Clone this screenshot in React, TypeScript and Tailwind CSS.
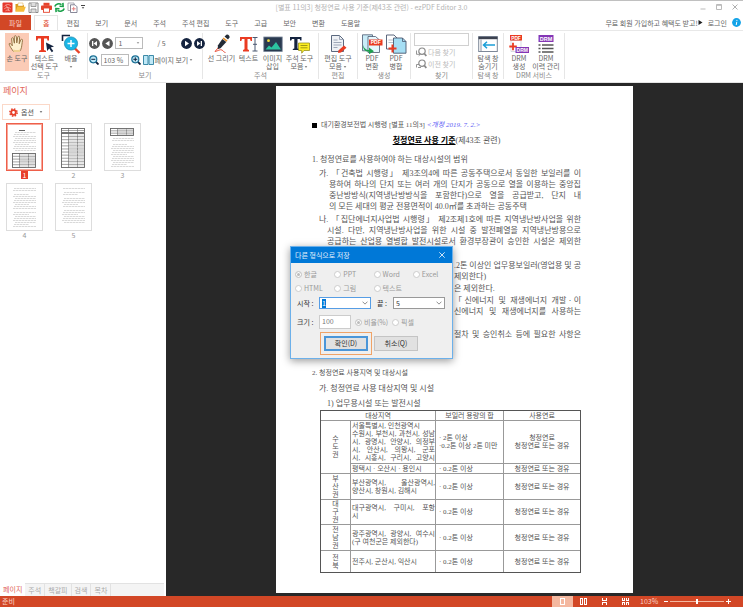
import React, { useEffect, useRef, useState } from 'react';

const UI_FONT = 'font-["Noto_Sans_CJK_KR","Open_Sans",sans-serif]';
const DOC_FONT = 'font-["Liberation_Serif","Noto_Sans_CJK_KR",serif]';

/* ---------- small shared pieces ---------- */

function Caret({ className = '' }: { className?: string }) {
  return (
    <svg viewBox="0 0 5 3" className={`inline-block shrink-0 w-[4px] h-[2px] ${className}`} fill="currentColor">
      <path d="M0.5 0.3h4L2.5 2.7z" />
    </svg>
  );
}

function Chevron() {
  return (
    <svg viewBox="0 0 8 5" className="w-[6px] h-[4px]" fill="none" stroke="#777" strokeWidth="1.1">
      <path d="M0.7 0.7L4 4l3.3-3.3" />
    </svg>
  );
}

/* ---------- title bar ---------- */

const quickIcons = [
  {
    label: 'ezPDF',
    art: (
      <>
        <rect x="0.5" y="0.5" width="10" height="10" rx="1" fill="#e5372c" />
        <path d="M2.2 4.5C4 2 7 2 8.800 3.800M2.200 6.800c2.500-2 5-1.500 6.600.2M3.500 8.800c1.500-1 3-1 4.300 0M4 3.500c1.500 1 2.500 3 2.500 5" stroke="#fbc9c0" strokeWidth="0.7" fill="none" />
      </>
    ),
  },
  {
    label: '열기',
    art: (
      <>
        <path d="M0.5 9.500V2h3.500l1 1.200h4v1.500" fill="#d99a1e" />
        <path d="M3 1h5v3H3z" fill="#fff" stroke="#d9a640" strokeWidth="0.5" />
        <path d="M0.5 9.800L2.300 4.800h8.500L9 9.800z" fill="#f6bd3b" />
      </>
    ),
  },
  {
    label: '저장',
    art: (
      <>
        <path d="M1 1h9v9.500H1z" fill="#fff" stroke="#8a8a8a" />
        <path d="M3 1v3.500h5V1M3 10.500V7h5v3.500" fill="#ddd" stroke="#8a8a8a" strokeWidth="0.8" />
      </>
    ),
  },
  {
    label: '인쇄',
    art: (
      <>
        <rect x="2.500" y="0.800" width="6" height="3" fill="#e5432c" />
        <rect x="0" y="3.500" width="11" height="4.500" rx="0.800" fill="#e5432c" />
        <rect x="2.500" y="6" width="6" height="4.300" fill="#fff" stroke="#e5432c" strokeWidth="0.900" />
      </>
    ),
  },
  {
    label: '새로 고침',
    art: (
      <path
        d="M0.800 4.500C1.500 2 5 .8 7.500 2.600M10.200 6.500C9.500 9 6 10.200 3.500 8.400M5.500 4.300l3.600.2-.2-3.600M5.500 6.700l-3.600-.2.2 3.600"
        fill="none"
        stroke="#18a048"
        strokeWidth="1.600"
      />
    ),
  },
  {
    label: '문서 추가',
    art: (
      <>
        <path d="M1 1h6v7.500H1z" fill="#fff" stroke="#9a9aa5" strokeWidth="0.800" />
        <path d="M3.500 2.800h4.500l2 2v5.700h-6.500z" fill="#fff" stroke="#6b6b80" strokeWidth="0.800" />
        <path d="M6.700 4.800v4M4.700 6.800h4" stroke="#e58080" strokeWidth="1" />
      </>
    ),
  },
];

function TitleBar() {
  return (
    <header className="h-[15px] pb-[2px] border-t border-[#c0c0c0] grid grid-cols-[1fr_auto_1fr] items-center">
      <div className="flex items-center gap-[2px] pl-[2px]">
        {quickIcons.map((q) => (
          <button key={q.label} aria-label={q.label} title={q.label}>
            <svg viewBox="0 0 11 11" className="block size-[11px]">{q.art}</svg>
          </button>
        ))}
        <button aria-label="빠른 실행 사용자 지정" className="flex flex-col items-center gap-px text-[#444] pl-px">
          <span className="w-[4px] h-px bg-[#444]" />
          <Caret className="block" />
        </button>
      </div>
      <h1 className="text-[7px] leading-[12px] text-[#b4b4b4] whitespace-nowrap">
        [별표 11의3] 청정연료 사용 기준(제43조 관련) - ezPDF Editor 3.0
      </h1>
      <div className="flex justify-end gap-[10px] pr-[5px]">
        <button aria-label="최소화">
          <svg viewBox="0 0 6 6" className="block size-[6px]" stroke="#bbb" fill="none"><path d="M0.500 5h5" /></svg>
        </button>
        <button aria-label="최대화">
          <svg viewBox="0 0 6 6" className="block size-[6px]" stroke="#bbb" fill="none"><path d="M0.500 0.500h5v5h-5zM0.500 1.300h5" /></svg>
        </button>
        <button aria-label="닫기">
          <svg viewBox="0 0 6 6" className="block size-[6px]" stroke="#b0b0b0" fill="none"><path d="M0.500 0.500l5 5M5.500 0.500l-5 5" /></svg>
        </button>
      </div>
    </header>
  );
}

/* ---------- ribbon tabs ---------- */

const ribbonTabs = ['홈', '편집', '보기', '문서', '주석', '주석 편집', '도구', '고급', '보안', '변환', '도움말'];

function RibbonTabs() {
  const [active, setActive] = useState('홈');
  return (
    <nav className="h-4 flex items-stretch border-b border-[#e8e8e8] text-[7px] leading-[16px] text-[#666] whitespace-nowrap">
      <button className="w-[31px] bg-[#d24726] text-[#fbd5c8] mr-[3px]">파일</button>
      {ribbonTabs.map((tab) => (
        <button
          key={tab}
          onClick={() => setActive(tab)}
          className={tab === active ? 'px-2 border-x border-t border-[#e4e4e4] text-[#e0452a] leading-[14px]' : 'px-2'}
        >
          {tab}
        </button>
      ))}
      <div className="ml-auto flex items-center gap-[5px] pr-[2px]">
        <a href="#join" className="flex items-center">
          무료 회원 가입하고 혜택도 받고!
          <svg viewBox="0 0 5 5" className="size-[5px]" fill="#222"><path d="M0.500 0l4 2.500-4 2.500z" /></svg>
        </a>
        <a href="#login">로그인</a>
        <button aria-label="정보">
          <svg viewBox="0 0 9 9" className="block size-[9px]">
            <circle cx="4.500" cy="4.500" r="4.400" fill="#13a3e8" />
            <path d="M4.800 3.800L4.200 7M4.900 1.900v1" stroke="#fff" strokeWidth="1" />
          </svg>
        </button>
      </div>
    </nav>
  );
}

/* ---------- ribbon icons ---------- */

const HandIcon = () => (
  <svg viewBox="0 0 20 20" className="w-5 h-5">
    <path
      d="M6.500 17.500C5 15.500 2.500 12 2 9.800c.8-.8 2-.2 3.300 2L4.600 4.600c.2-1.200 1.600-1.100 1.900.1l.9 4.500L7.300 2.600c.2-1.200 1.800-1.200 2 0l.5 6.300 1-5.900c.3-1.100 1.800-.9 1.800.3l-.4 6.400 1.700-4c.5-1 1.800-.5 1.600.6-.4 3-.7 5-1 7-.3 1.800-1 3-2 4.200z"
      fill="#fdf0cf"
      stroke="#8a6a3a"
      strokeWidth="0.900"
    />
    <path d="M6.500 15.500c2 .8 4.500.8 6.500 0v2.500H6.500z" fill="#f0cf8e" />
  </svg>
);

const SelectTextIcon = () => (
  <svg viewBox="0 0 20 20" className="w-5 h-5">
    <path d="M1 2h13v4.500h-1.500L12 4.500H9v11.500l2 .7V18H4v-1.300l2-.7V4.500H3L2.500 6.500H1z" fill="#ea3b22" />
    <path d="M11 8.500l8 4-3.300.9 2.600 3.700-1.500 1.200-2.600-3.700-2 2.400z" fill="#14233f" />
  </svg>
);

const ZoomIcon = () => (
  <svg viewBox="0 0 20 20" className="w-5 h-5">
    <path d="M1.500 7V1.500H9" fill="none" stroke="#14233f" strokeWidth="1.600" />
    <path d="M13.500 14l5 5" stroke="#e8432a" strokeWidth="2.400" />
    <circle cx="10" cy="9.500" r="6.600" fill="#1cb6e6" stroke="#1484a8" strokeWidth="0.700" />
    <path d="M10 6v7M6.500 9.500h7" stroke="#fff" strokeWidth="1.500" />
  </svg>
);

const PenIcon = () => (
  <svg viewBox="0 0 20 20" className="w-5 h-5">
    <path d="M12.500 2.500l2-1.800c1.500-.6 3.500 1 3 2.800l-1.500 2z" fill="#222b36" />
    <path d="M11.500 3.500l4 3-1 1.200-4-3z" fill="#e8902a" />
    <path d="M10.300 5l4 3-5.800 6.300-3 1 .5-4z" fill="#222b36" />
    <path d="M6 14l-3 3.500c3-.5 5-2.500 7-1.500 1.500.8 1 2 3.500 2.500" fill="none" stroke="#e8432a" strokeWidth="0.900" />
  </svg>
);

const TextIcon = () => (
  <svg viewBox="0 0 20 20" className="w-5 h-5">
    <path d="M1 3h12v4h-1.300L11 5H8.500v10.300l1.500.7v1.500H4V16l1.500-.7V5H3l-.7 2H1z" fill="#ea3b22" />
    <path d="M13.500 3.500h5M13.500 17h5M16 3.500V17M14 10.300h4" stroke="#4a5870" strokeWidth="1" />
  </svg>
);

const ImageIcon = () => (
  <svg viewBox="0 0 20 20" className="w-5 h-5">
    <rect x="0.800" y="3" width="18.400" height="14.500" fill="#2a3a50" stroke="#7b8899" strokeWidth="0.800" />
    <circle cx="5.500" cy="6.700" r="1.400" fill="#f6e03a" />
    <path d="M2.500 15.500l3.500-4 2.500 2 4.500-5.500 5 7.500z" fill="#2cc4a0" />
  </svg>
);

const NoteIcon = () => (
  <svg viewBox="0 0 20 20" className="w-5 h-5">
    <path d="M0 3h11.500v3.500h-1.200L9.700 5H7.500v9.500l1.500.5v1H2.800v-1l1.500-.5V5H2l-.8 1.500H0z" fill="#14233f" />
    <path d="M8.500 9H19.500v7.500H14l-2.300 2.700v-2.700H8.500z" fill="#fdee21" stroke="#8a8410" strokeWidth="0.700" />
    <path d="M10.500 11.500h7M10.500 13.800h7" stroke="#8a8410" strokeWidth="0.800" />
  </svg>
);

const EditDocIcon = () => (
  <svg viewBox="0 0 20 20" className="w-5 h-5">
    <path d="M3.500 1.500h8l4 4v12h-12z" fill="#eef1f5" stroke="#4a5870" strokeWidth="0.900" />
    <path d="M11.500 1.500v4h4M5.500 6h4M5.500 8.500h8M5.500 11h8M5.500 13.500h4" fill="none" stroke="#8a96a8" strokeWidth="0.800" />
    <path d="M10 19l.7-2.800 5.300-4.700 2.500 2.300-5.500 4.700z" fill="#ea3b22" />
  </svg>
);

const PdfConvertIcon = () => (
  <svg viewBox="0 0 22 20" className="w-[22px] h-5">
    <path d="M1.500 0.800h10v16h-10z" fill="#c9ecf8" stroke="#4a5870" strokeWidth="0.800" />
    <path d="M7 2.500h7.500l4 3.500v12.500H7z" fill="#e6f7fd" stroke="#4a5870" strokeWidth="0.800" />
    <rect x="8" y="5.500" width="13.500" height="6" fill="#ea3b22" />
    <text x="14.700" y="10.400" textAnchor="middle" fontSize="5" fontWeight="700" fill="#fff" fontFamily="Liberation Sans">PDF</text>
    <path d="M2 10.500c.5 3.500 3 5.500 6 5.500v-2.500l5 3.700-5 3V17.800C4 17.800 1.800 15 2 10.500z" fill="#1fa050" />
  </svg>
);

const PdfMergeIcon = () => (
  <svg viewBox="0 0 22 20" className="w-[22px] h-5">
    <path d="M1.500 1h7.500l3 3v11H1.500z" fill="#fff" stroke="#4a5870" strokeWidth="0.900" />
    <path d="M3.500 6h6M3.500 8.500h6" stroke="#9aa5b5" strokeWidth="0.700" />
    <path d="M8.500 4h9l3.500 3.500v11.700H8.500z" fill="#a5def4" stroke="#4a5870" strokeWidth="0.900" />
    <path d="M17.500 4v3.500h3.500" fill="none" stroke="#4a5870" strokeWidth="0.800" />
    <path d="M7.500 10.500v8M3.500 14.500h8" stroke="#ea3b22" strokeWidth="2" />
  </svg>
);

const HidePaneIcon = () => (
  <svg viewBox="0 0 20 20" className="w-5 h-5">
    <rect x="0.700" y="2.500" width="18.600" height="15" fill="#fff" stroke="#7d8898" strokeWidth="1" />
    <path d="M0.500 4h19" stroke="#3c4250" strokeWidth="2.400" />
    <path d="M3 5.500v12" stroke="#7d8898" strokeWidth="0.900" />
    <path d="M17 11H5.500M9 7.800L5.500 11 9 14.200" fill="none" stroke="#1b9fd8" strokeWidth="1.500" />
  </svg>
);

const DrmCreateIcon = () => (
  <svg viewBox="0 0 20 20" className="w-5 h-5">
    <path d="M2 6.500h10v11H2z" fill="#fff" stroke="#c8ccd4" strokeWidth="0.700" />
    <rect x="1" y="1" width="12" height="5.500" fill="#ea3b22" />
    <text x="7" y="5.500" textAnchor="middle" fontSize="4.800" fontWeight="700" fill="#fff" fontFamily="Liberation Sans">PDF</text>
    <path d="M4 8.700v7.500M0.300 12.500h7.500" stroke="#ea3b22" strokeWidth="1.800" />
    <rect x="6.500" y="13" width="13.500" height="6" fill="#8436b5" />
    <text x="13.300" y="17.900" textAnchor="middle" fontSize="5" fontWeight="700" fill="#fff" fontFamily="Liberation Sans">DRM</text>
  </svg>
);

const DrmHistoryIcon = () => (
  <svg viewBox="0 0 20 20" className="w-5 h-5">
    <rect x="2.500" y="1" width="15" height="7" fill="#8436b5" />
    <text x="10" y="6.500" textAnchor="middle" fontSize="5.500" fontWeight="700" fill="#fff" fontFamily="Liberation Sans">DRM</text>
    <path d="M2.500 11h2M2.500 14.500h2M2.500 18h2" stroke="#555" strokeWidth="1.500" />
    <path d="M6 11h11.500M6 14.500h11.500M6 18h11.500" stroke="#555" strokeWidth="1.500" />
  </svg>
);

function FindIcon({ flip = false }: { flip?: boolean }) {
  return (
    <svg viewBox="0 0 11 10" className="w-[11px] h-[10px]" fill="none" stroke="#8a8a8a">
      <circle cx="6" cy="4.200" r="3.200" strokeWidth="1.200" />
      <path d="M8.300 6.500l2 2.500" strokeWidth="1.800" />
      <path d={flip ? 'M0.500 8.500V5.500h2.500M5 8.500H2' : 'M0.500 3.500v3.800h3.500M2.700 5.800l1.600 1.500-1.600 1.500'} strokeWidth="0.900" />
    </svg>
  );
}

/* ---------- ribbon ---------- */

interface ToolProps {
  icon: React.ReactNode;
  lines: string[];
  width: string;
  menu?: boolean;
  active?: boolean;
}

function Tool({ icon, lines, width, menu, active }: ToolProps) {
  return (
    <button className={`${width} h-[38px] pt-px flex flex-col items-center whitespace-nowrap ${active ? 'bg-[#fbcbb6]' : ''}`}>
      {icon}
      {lines.map((line, i) => (
        <span key={line}>
          {line}
          {menu && lines.length > 1 && i === lines.length - 1 && <Caret className="ml-px mb-px" />}
        </span>
      ))}
      {menu && lines.length === 1 && <Caret className="mt-1" />}
    </button>
  );
}

function Group({ title, width, children }: { title: string; width: string; children: React.ReactNode }) {
  return (
    <section aria-label={title} className={`${width} shrink-0 border-r border-[#e6e6e6] flex flex-col`}>
      <div className="h-[38px] flex justify-center">{children}</div>
      <div className="text-center text-[#888]">{title}</div>
    </section>
  );
}

function NavButton({ label, color, d }: { label: string; color: string; d: string }) {
  return (
    <button aria-label={label}>
      <svg viewBox="0 0 11 11" className="block size-[11px]">
        <circle cx="5.500" cy="5.500" r="5.400" fill={color} />
        <path d={d} fill="#fff" />
      </svg>
    </button>
  );
}

function ZoomButton({ label, plus }: { label: string; plus?: boolean }) {
  return (
    <button aria-label={label}>
      <svg viewBox="0 0 10 10" className="block size-[10px]" fill="none">
        <path d="M6.500 6.500l3 3" stroke="#14233f" strokeWidth="1.800" />
        <circle cx="4.300" cy="4.300" r="3.500" fill="#bfe8f7" stroke="#1b6f94" strokeWidth="1.200" />
        <path d={plus ? 'M2.300 4.300h4M4.300 2.300v4' : 'M2.300 4.300h4'} stroke="#14233f" strokeWidth="1" />
      </svg>
    </button>
  );
}

function Ribbon() {
  return (
    <div className="flex pt-[2px] pb-[3px] border-b border-[#e4e4e4] text-[7px] leading-[8px] text-[#666] overflow-hidden">
      <Group title="도구" width="w-[88px]">
        <Tool active icon={<HandIcon />} lines={['손 도구']} width="w-6" />
        <Tool icon={<SelectTextIcon />} lines={['텍스트', '선택 도구']} width="w-[31px]" />
        <Tool menu icon={<ZoomIcon />} lines={['배율']} width="w-[22px]" />
      </Group>

      <Group title="보기" width="w-[115px]">
        <div className="flex-1 flex flex-col gap-[5px] pl-[3px] pt-1">
          <div className="flex items-center gap-[2px]">
            <NavButton label="첫 페이지" color="#555" d="M3 3h1.300v5H3zM8 3v5L4.600 5.500z" />
            <NavButton label="이전 페이지" color="#555" d="M7.500 2.700v5.600L3.300 5.500z" />
            <div className="relative">
              <select aria-label="페이지" className="block appearance-none w-7 h-3 pl-[3px] border border-[#bbb] bg-white text-[7px] leading-[10px]" defaultValue="1">
                {['1', '2', '3', '4', '5'].map((n) => <option key={n}>{n}</option>)}
              </select>
              <Caret className="absolute right-[3px] top-[5px] text-[#888] pointer-events-none" />
            </div>
            <span className="w-[34px] text-center">/ 5</span>
            <NavButton label="다음 페이지" color="#14233f" d="M4 2.700v5.600l4-2.800z" />
            <NavButton label="마지막 페이지" color="#14233f" d="M3 3l3.400 2.500L3 8zM6.700 3H8v5H6.700z" />
          </div>
          <div className="flex items-center gap-[2px]">
            <ZoomButton label="축소" />
            <input aria-label="배율" defaultValue="103 %" className="w-7 h-3 px-[2px] border border-[#bbb] text-[7px] leading-[10px]" />
            <ZoomButton plus label="확대" />
            <button className="flex items-center whitespace-nowrap">
              <svg viewBox="0 0 11 10" className="shrink-0 w-[11px] h-[10px]">
                <path d="M0.500 0.500h4.500v9H0.500zM6 0.500h4.500v9H6z" fill="#bfe8f7" stroke="#2b7f9e" strokeWidth="0.900" />
              </svg>
              <span className="pl-px">페이지 보기</span>
              <Caret className="ml-px" />
            </button>
          </div>
        </div>
      </Group>

      <Group title="주석" width="w-[116px]">
        <Tool icon={<PenIcon />} lines={['선 그리기']} width="w-[30px]" />
        <Tool icon={<TextIcon />} lines={['텍스트']} width="w-6" />
        <Tool icon={<ImageIcon />} lines={['이미지', '삽입']} width="w-6" />
        <Tool menu icon={<NoteIcon />} lines={['주석 도구', '모음']} width="w-[30px]" />
      </Group>

      <Group title="편집" width="w-[39px]">
        <Tool menu icon={<EditDocIcon />} lines={['편집 도구', '모음']} width="w-[30px]" />
      </Group>

      <Group title="생성" width="w-[53px]">
        <Tool icon={<PdfConvertIcon />} lines={['PDF', '변환']} width="w-6" />
        <Tool icon={<PdfMergeIcon />} lines={['PDF', '병합']} width="w-6" />
      </Group>

      <Group title="찾기" width="w-[62px]">
        <div className="flex-1 flex flex-col items-start px-[3px] text-[#bbb]">
          <input aria-label="찾기" className="w-full h-[13px] border border-[#d0d0d0] px-[2px]" />
          <button disabled className="flex items-center gap-px h-3 ml-[2px]"><FindIcon />다음 찾기</button>
          <button disabled className="flex items-center gap-px h-3 ml-[2px]"><FindIcon flip />이전 찾기</button>
        </div>
      </Group>

      <Group title="탐색 창" width="w-[31px]">
        <Tool icon={<HidePaneIcon />} lines={['탐색 창', '숨기기']} width="w-6" />
      </Group>

      <Group title="DRM 서비스" width="w-[61px]">
        <Tool icon={<DrmCreateIcon />} lines={['DRM', '생성']} width="w-6" />
        <Tool icon={<DrmHistoryIcon />} lines={['DRM', '이력 관리']} width="w-[30px]" />
      </Group>
    </div>
  );
}

/* ---------- page thumbnails ---------- */

function TextRows({ from, to, skip = [] }: { from: number; to: number; skip?: number[] }) {
  const rows: number[] = [];
  for (let y = from; y <= to; y += 2) if (!skip.includes(y)) rows.push(y);
  return (
    <g stroke="#c9c9c9" strokeWidth="0.700" strokeDasharray="2.500 0.500">
      {rows.map((y) => <path key={y} d={`M${6 + (y % 3)} ${y}.500H${y % 5 === 0 ? 22 : 29}`} />)}
    </g>
  );
}

function GridBlock({ y, h, rows, dense }: { y: number; h: number; rows: number; dense?: boolean }) {
  const step = h / rows;
  return (
    <g stroke="#666" strokeWidth="0.600" fill="none">
      <rect x="5.500" y={y} width="23" height={h} strokeWidth="0.900" />
      <path d={`M12.500 ${y}v${h}M21.500 ${y}v${h}`} />
      {Array.from({ length: rows - 1 }, (_, i) => <path key={i} d={`M5.500 ${y + step * (i + 1)}h23`} />)}
      {dense &&
        Array.from({ length: rows }, (_, i) => (
          <path key={`d${i}`} stroke="#bbb" d={`M13 ${y + step * (i + 0.5)}h15`} />
        ))}
    </g>
  );
}

const thumbs = [
  {
    page: 1,
    art: (
      <>
        <path d="M12 6.500h6" stroke="#555" strokeWidth="0.900" />
        <TextRows from={8} to={27} />
        <GridBlock y={29.5} h={14} rows={5} dense />
      </>
    ),
  },
  {
    page: 2,
    art: (
      <>
        <GridBlock y={4.5} h={4} rows={2} />
        <GridBlock y={9.5} h={34} rows={11} dense />
      </>
    ),
  },
  {
    page: 3,
    art: (
      <>
        <GridBlock y={4.5} h={7} rows={3} dense />
        <TextRows from={14} to={42} skip={[18]} />
      </>
    ),
  },
  { page: 4, art: <TextRows from={4} to={42} skip={[8, 26]} /> },
  { page: 5, art: <TextRows from={4} to={38} skip={[6, 12, 24]} /> },
];

const sideTabs = ['페이지', '주석', '책갈피', '검색', '목차'];

function Sidebar() {
  const [page, setPage] = useState(1);
  return (
    <aside className="w-[166px] shrink-0 flex flex-col bg-white">
      <h2 className="text-[9px] leading-[15px] text-[#e2665a] px-[3px]">페이지</h2>
      <button className="self-start mt-[6px] ml-[2px] h-4 px-[6px] flex items-center gap-[3px] border border-[#fbd8c8] text-[7px] leading-[14px] text-[#555]">
        <svg viewBox="0 0 9 9" className="size-[9px]">
          <circle cx="4.500" cy="4.500" r="3.600" fill="none" stroke="#e8402a" strokeWidth="1.600" strokeDasharray="1.500 1.327" />
          <circle cx="4.500" cy="4.500" r="2.300" fill="none" stroke="#e8402a" strokeWidth="1.800" />
        </svg>
        옵션
        <Caret className="ml-[2px]" />
      </button>
      <div className="mt-[3px] px-[6px] flex flex-wrap content-start gap-x-[12px] gap-y-[4px] flex-1">
        {thumbs.map((t) => (
          <button
            key={t.page}
            onClick={() => setPage(t.page)}
            className="w-[37px] flex flex-col items-center text-[7px] leading-[8px] text-[#999]"
          >
            <span className={`w-full h-12 border bg-white ${page === t.page ? 'border-[#ee5f4a] ring-1 ring-inset ring-[#f7a79a]' : 'border-[#ddd]'}`}>
              <svg viewBox="0 0 35 46" className="block w-full h-full">{t.art}</svg>
            </span>
            <span className={page === t.page ? 'bg-[#e8402a] text-white px-[2px]' : 'px-[2px]'}>{t.page}</span>
          </button>
        ))}
      </div>
      <div className="flex h-[13px] mr-[2px] text-[7px] leading-[11px] text-[#aaa] whitespace-nowrap">
        {sideTabs.map((tab, i) => (
          <button key={tab} className={i === 0 ? 'px-[3px] text-[#e2665a]' : 'px-[3px] border-t border-r border-[#e2e2e2] bg-[#f4f4f4]'}>
            {tab}
          </button>
        ))}
        <span className="flex-1 border-t border-[#e2e2e2] bg-[#f4f4f4]" />
      </div>
    </aside>
  );
}

/* ---------- document ---------- */

// A line that runs to the right margin
function Full({ children }: { children: React.ReactNode }) {
  return <span className="block text-justify [text-align-last:justify] whitespace-nowrap">{children}</span>;
}

// The end of a line, kept beside the dialog
function Tail({ children, justify }: { children: React.ReactNode; justify?: boolean }) {
  return (
    <span className={`block ml-auto w-[127px] whitespace-nowrap ${justify ? '[text-align-last:justify]' : ''}`}>
      {children}
    </span>
  );
}

const regions = [
  { name: ['부', '산', '권'], area: ['부산광역시, 울산광역시,', '양산시, 창원시, 김해시'], h: 'h-[26px]' },
  { name: ['대', '구', '권'], area: ['대구광역시, 구미시, 포항', '시'], h: 'h-[25px]' },
  { name: ['전', '남', '권'], area: ['광주광역시, 광양시, 여수시', '(구 여천군은 제외한다)'], h: 'h-[26px]' },
  { name: ['전', '북'], area: ['전주시, 군산시, 익산시'], h: 'h-[22px]' },
];

function RegionTable() {
  const cell = 'border border-[#999] p-0';
  return (
    <table className="mt-px ml-2 w-[260px] table-fixed border-collapse outline outline-1 -outline-offset-1 outline-[#555] text-[7px] leading-[8px]">
      <colgroup>
        <col className="w-[30px]" />
        <col className="w-[85px]" />
        <col className="w-[68px]" />
        <col className="w-[77px]" />
      </colgroup>
      <thead>
        <tr className="h-[10px]">
          <th colSpan={2} className={`${cell} font-normal`}>대상지역</th>
          <th className={`${cell} font-normal`}>보일러 용량의 합</th>
          <th className={`${cell} font-normal`}>사용연료</th>
        </tr>
      </thead>
      <tbody>
        <tr className="h-[43px]">
          <td rowSpan={2} className={`${cell} text-center`}>수<br />도<br />권</td>
          <td className={`${cell} pl-px`}>
            서울특별시, 인천광역시
            <Full>수원시, 부천시, 과천시, 성남</Full>
            <Full>시, 광명시, 안양시, 의정부</Full>
            <Full>시, 안산시, 의왕시, 군포</Full>
            <Full>시, 시흥시, 구리시, 고양시</Full>
          </td>
          <td className={`${cell} pl-[3px] whitespace-nowrap`}>· 2톤 이상<br />·0.2톤 이상 2톤 미만</td>
          <td className={`${cell} text-center`}>청정연료<br />청정연료 또는 경유</td>
        </tr>
        <tr className="h-[10px]">
          <td className={`${cell} pl-px whitespace-nowrap`}>평택시 · 오산시 · 용인시</td>
          <td className={`${cell} pl-[3px]`}>· 0.2톤 이상</td>
          <td className={`${cell} text-center`}>청정연료 또는 경유</td>
        </tr>
        {regions.map((r) => (
          <tr key={r.name.join('')} className={r.h}>
            <td className={`${cell} text-center`}>
              {r.name.map((c) => <span key={c} className="block">{c}</span>)}
            </td>
            <td className={`${cell} pl-px whitespace-nowrap`}>
              {r.area.length > 1 ? (
                <>
                  <Full>{r.area[0]}</Full>
                  {r.area[1]}
                </>
              ) : (
                r.area[0]
              )}
            </td>
            <td className={`${cell} pl-[3px]`}>· 0.2톤 이상</td>
            <td className={`${cell} text-center`}>청정연료 또는 경유</td>
          </tr>
        ))}
      </tbody>
    </table>
  );
}

function DocumentPage() {
  return (
    <article className={`relative w-[357px] bg-white pt-[34px] pb-5 pl-9 pr-[52px] text-[8px] leading-[11px] text-[#555] ${DOC_FONT}`}>
      <p className="text-[7px] leading-[11px] whitespace-nowrap flex items-center">
        <span className="size-[5px] bg-black mr-1" />
        대기환경보전법 시행령 [별표 11의3]&nbsp;
        <em className="text-[#5a5af5]">&lt;개정 2019. 7. 2.&gt;</em>
      </p>
      <h3 className="mt-1 text-center">
        <b className="text-black underline">청정연료 사용 기준</b>(제43조 관련)
      </h3>
      <p className="mt-2">1. 청정연료를 사용하여야 하는 대상시설의 범위</p>
      <div className="mt-[3px] flex flex-col gap-[2px]">
        <p className="pl-[17px]">
          <span className="block -ml-[10px]"><Full>가. 「건축법 시행령」 제3조의4에 따른 공동주택으로서 동일한 보일러를 이</Full></span>
          <Full>용하여 하나의 단지 또는 여러 개의 단지가 공동으로 열을 이용하는 중앙집</Full>
          <Full>중난방방식(지역냉난방방식을 포함한다)으로 열을 공급받고, 단지 내</Full>
          의 모든 세대의 평균 전용면적이 40.0㎡를 초과하는 공동주택
        </p>
        <p className="pl-[15px]">
          <span className="block -ml-2"><Full>나. 「집단에너지사업법 시행령」 제2조제1호에 따른 지역냉난방사업을 위한</Full></span>
          <Full>시설. 다만, 지역냉난방사업을 위한 시설 중 발전폐열을 지역냉난방용으로</Full>
          <Full>공급하는 산업용 열병합 발전시설로서 환경부장관이 승인한 시설은 제외한</Full>
        </p>
      </div>
      <div className="mt-[13px] flex flex-col gap-px">
        <p>
          <Tail justify>.2톤 이상인 업무용보일러(영업용 및 공</Tail>
          <Tail>제외한다)</Tail>
        </p>
        <p><Tail>은 제외한다.</Tail></p>
        <p>
          <Tail justify>「신에너지 및 재생에너지 개발ㆍ이</Tail>
          <Tail justify>신에너지 및 재생에너지를 사용하는</Tail>
        </p>
        <p className="mt-[11px]"><Tail justify>절차 및 승인취소 등에 필요한 사항은</Tail></p>
      </div>
      <p className="mt-7 text-[7px] leading-[11px]">2. 청정연료 사용지역 및 대상시설</p>
      <p className="mt-1 pl-[7px]">가. 청정연료 사용 대상지역 및 시설</p>
      <p className="mt-1 pl-[15px]">1) 업무용시설 또는 발전시설</p>
      <RegionTable />
      <SaveDialog />
    </article>
  );
}

/* ---------- "save as another format" dialog ---------- */

interface RadioProps {
  name: string;
  label: string;
  checked?: boolean;
}

function Radio({ name, label, checked }: RadioProps) {
  return (
    <label className="flex items-center gap-[2px] text-[#999] whitespace-nowrap">
      <input
        type="radio"
        name={name}
        disabled
        defaultChecked={checked}
        className="appearance-none size-[7px] rounded-full border border-[#ccc] bg-white checked:bg-[#bbb] checked:ring-1 checked:ring-inset checked:ring-white"
      />
      {label}
    </label>
  );
}

const formats = ['한글', 'PPT', 'Word', 'Excel', 'HTML', '그림', '텍스트'];

function SaveDialog() {
  const startRef = useRef<HTMLInputElement>(null);

  useEffect(() => {
    startRef.current?.focus();
    startRef.current?.select();
  }, []);

  return (
    <div
      role="dialog"
      aria-label="다른 형식으로 저장"
      className={`absolute left-[14px] top-[160px] w-[163px] border border-[#6cb0ea] bg-[#efefef] shadow-[0_2px_8px_rgba(0,0,0,0.4)] text-[7px] leading-[9px] text-[#333] ${UI_FONT}`}
    >
      <div className="h-4 flex items-center justify-between bg-[#0078d7] pl-1 pr-[7px] text-[#e4f1fc]">
        <span>다른 형식으로 저장</span>
        <button aria-label="닫기">
          <svg viewBox="0 0 6 6" className="block size-[6px]" stroke="#fff" strokeWidth="0.800"><path d="M0.300 0.300l5.400 5.400M5.700 0.300L0.300 5.700" /></svg>
        </button>
      </div>
      <div className="grid grid-cols-4 gap-y-[5px] pl-1 pt-[7px]">
        {formats.map((f) => <Radio key={f} name="format" label={f} checked={f === '한글'} />)}
      </div>
      <div className="flex items-center mt-1 pl-[6px]">
        <label htmlFor="start" className="w-[22px]">시작 :</label>
        <div className="w-[52px] h-3 flex items-center border border-[#569de5] bg-white pr-[2px]">
          <input
            id="start"
            ref={startRef}
            defaultValue="1"
            className="min-w-0 flex-1 pl-[2px] text-[7px] leading-[9px] outline-none selection:bg-[#0078d7] selection:text-white"
          />
          <button aria-label="시작 페이지 목록"><Chevron /></button>
        </div>
        <label htmlFor="end" className="ml-[6px] w-4">끝 :</label>
        <div className="relative">
          <select id="end" defaultValue="5" className="block appearance-none w-[52px] h-3 pl-[2px] border border-[#999] bg-white text-[7px] leading-[9px]">
            {['1', '2', '3', '4', '5'].map((n) => <option key={n}>{n}</option>)}
          </select>
          <span className="absolute right-[3px] top-1 pointer-events-none"><Chevron /></span>
        </div>
      </div>
      <div className="flex items-center mt-[6px] pl-[6px]">
        <label htmlFor="size" className="w-[22px]">크기 :</label>
        <input id="size" disabled defaultValue="100" className="w-8 h-[14px] pl-[2px] pb-[2px] border border-[#ccc] bg-white text-[7px] leading-[9px] text-[#777] mr-1" />
        <Radio name="unit" label="비율(%)" checked />
        <span className="w-1" />
        <Radio name="unit" label="픽셀" />
      </div>
      <div className="flex items-center gap-[2px] mt-[3px] pl-[29px] pb-[3px]">
        <span className="border border-[#f0a367] p-[3px]">
          <button className="block w-[44px] h-[15px] border-2 border-[#4b96d8] bg-[#e1e1e1]">확인(D)</button>
        </span>
        <button className="w-[44px] h-[15px] border border-[#c4c4c4] bg-[#e1e1e1]">취소(Q)</button>
      </div>
    </div>
  );
}

/* ---------- status bar ---------- */

const viewModes = [
  { label: '한 페이지', d: 'M3 1h5v7H3zM4 2v5h3V2z' },
  { label: '두 페이지', d: 'M2 1h3v7H2zM6 1h3v7H6zM3 2v5h1V2zM7 2v5h1V2z' },
  { label: '연속', d: 'M3 1h1v2h3V1h1v3H3zM3 5h5v3H7V6H4v2H3z' },
  { label: '연속 두 페이지', d: 'M2 1h1v2h1V1h1v3H2zM6 1h1v2h1V1h1v3H6zM2 5h3v3H4V6H3v2H2zM6 5h3v3H8V6H7v2H6z' },
];

function StatusBar() {
  return (
    <footer className="h-[11px] shrink-0 flex items-center bg-[#d24726] text-[#fbd5c8] text-[7px] leading-[11px]">
      <span className="pl-[2px]">준비</span>
      <div className="ml-auto flex items-center">
        {viewModes.map((m, i) => (
          <button key={m.label} aria-label={m.label} className={i === 0 ? 'w-[21px] h-[11px] flex justify-center items-center bg-[#f4b8a0]' : 'w-[21px] h-[11px] flex justify-center items-center'}>
            <svg viewBox="0 0 11 9" className="w-[11px] h-[9px]" fill="#fff" fillRule="evenodd"><path d={m.d} /></svg>
          </button>
        ))}
      </div>
      <span className="ml-1 w-6">103%</span>
      <button aria-label="축소" className="w-1 h-px bg-white" />
      <input
        type="range"
        aria-label="확대 비율"
        defaultValue={50}
        className="appearance-none mx-[2px] w-[54px] h-px bg-[#f4b8a0] [&::-webkit-slider-thumb]:appearance-none [&::-webkit-slider-thumb]:w-[2px] [&::-webkit-slider-thumb]:h-[5px] [&::-webkit-slider-thumb]:bg-white"
      />
      <button aria-label="확대" className="mr-3">
        <svg viewBox="0 0 5 5" className="block size-[5px]" stroke="#fff" strokeWidth="1"><path d="M0 2.500h5M2.500 0v5" /></svg>
      </button>
    </footer>
  );
}

export default function App() {
  return (
    <div className={`h-screen flex flex-col bg-white overflow-hidden ${UI_FONT}`}>
      <TitleBar />
      <RibbonTabs />
      <Ribbon />
      <main className="flex-1 min-h-0 flex">
        <Sidebar />
        <div className="flex-1 min-w-0 flex justify-center items-start pt-[3px] bg-[#282828] overflow-hidden">
          <DocumentPage />
        </div>
      </main>
      <StatusBar />
    </div>
  );
}
